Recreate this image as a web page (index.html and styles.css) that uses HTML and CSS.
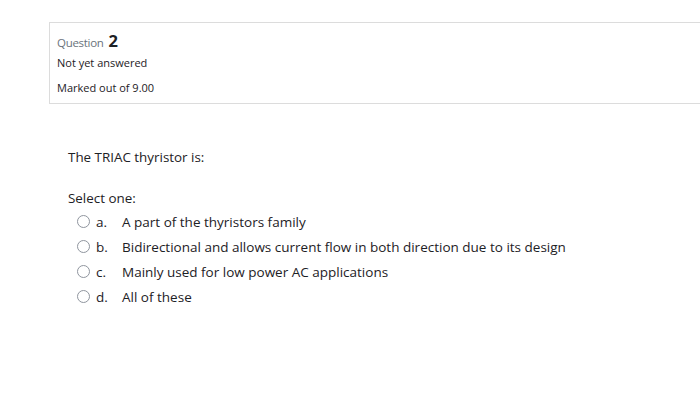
FILE: index.html
```html
<!DOCTYPE html>
<html>
<head>
<meta charset="utf-8">
<link rel="stylesheet" href="styles.css">
</head>
<body>
<div class="page">
  <div class="info">
    <h3 class="qno"><span class="qlabel">Question</span> <span class="num">2</span></h3>
    <div class="state">Not yet answered</div>
    <div class="grade">Marked out of 9.00</div>
  </div>
  <div class="content">
    <div class="qtext">The TRIAC thyristor is:</div>
    <div class="prompt">Select one:</div>
    <div class="answers">
      <label class="opt"><span class="radio"></span><span class="letter">a.</span><span class="txt">A part of the thyristors family</span></label>
      <label class="opt"><span class="radio"></span><span class="letter">b.</span><span class="txt">Bidirectional and allows current flow in both direction due to its design</span></label>
      <label class="opt"><span class="radio"></span><span class="letter">c.</span><span class="txt">Mainly used for low power AC applications</span></label>
      <label class="opt"><span class="radio"></span><span class="letter">d.</span><span class="txt">All of these</span></label>
    </div>
  </div>
</div>
</body>
</html>
```
FILE: styles.css
```css
html, body {
  margin: 0;
  padding: 0;
  background: #ffffff;
  overflow: hidden;
}
body {
  font-family: "Open Sans", "Noto Sans", sans-serif;
  color: #1d2125;
  width: 700px;
  height: 418px;
}
.page {
  padding-top: 22px;
}
.info {
  margin-left: 49px;
  border: 1px solid #dcdcdc;
  border-right: none;
  padding: 6px 7px 10px 7px;
  box-sizing: border-box;
  height: 82px;
}
.qno {
  margin: 0;
  font-weight: normal;
  line-height: 22px;
  height: 22px;
}
.qlabel {
  font-size: 11.5px;
  color: #6a737b;
  letter-spacing: -0.3px;
}
.num {
  font-size: 16.5px;
  font-weight: 700;
  color: #1d2125;
}
.state {
  font-size: 11px;
  line-height: 14px;
  margin-top: 5px;
}
.grade {
  font-size: 11px;
  line-height: 14px;
  margin-top: 11px;
}
.content {
  padding-left: 68px;
  padding-top: 43px;
}
.qtext {
  font-size: 13.4px;
  line-height: 20px;
}
.prompt {
  font-size: 13.4px;
  line-height: 20px;
  margin-top: 21px;
}
.answers {
  display: flex;
  flex-direction: column;
  margin-top: 1px;
}
.opt {
  display: flex;
  align-items: center;
  height: 25px;
  font-size: 13.5px;
}
.radio {
  width: 13px;
  height: 13px;
  border: 1px solid #8f959e;
  border-radius: 50%;
  margin-left: 9px;
  margin-right: 6px;
  box-sizing: border-box;
}
.letter {
  width: 26px;
}
.txt {
  white-space: nowrap;
}
```
